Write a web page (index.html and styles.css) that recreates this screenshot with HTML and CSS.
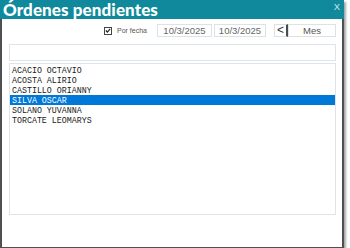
FILE: index.html
```html
<!DOCTYPE html>
<html lang="es">
<head>
<meta charset="utf-8">
<title>Órdenes pendientes</title>
<link rel="stylesheet" href="styles.css">
</head>
<body>
<div class="window">
  <div class="titlebar">
    <span class="title">Órdenes pendientes</span>
    <span class="close">X</span>
  </div>
  <div class="content">
    <div class="toolbar">
      <label class="check">
        <span class="box"><svg width="7" height="7" viewBox="0 0 7 7"><path d="M1 3.5 L2.8 5.3 L6 1.5" fill="none" stroke="#222" stroke-width="1.4"/></svg></span>
        <span class="check-text">Por fecha</span>
      </label>
      <div class="field date1">10/3/2025</div>
      <div class="field date2">10/3/2025</div>
      <div class="prev">&lt;</div>
      <div class="field mes">Mes</div>
    </div>
    <div class="search"></div>
    <div class="list">
      <div class="row">ACACIO OCTAVIO</div>
      <div class="row">ACOSTA ALIRIO</div>
      <div class="row">CASTILLO ORIANNY</div>
      <div class="row selected">SILVA OSCAR</div>
      <div class="row">SOLANO YUVANNA</div>
      <div class="row">TORCATE LEOMARYS</div>
    </div>
  </div>
</div>
</body>
</html>
```

FILE: styles.css
```css
html, body {
  margin: 0;
  padding: 0;
  background: #ffffff;
}

.window {
  width: 344px;
  display: flex;
  flex-direction: column;
  box-shadow: 2px 2px 2px rgba(0, 0, 0, 0.35);
}

.titlebar {
  height: 19px;
  background: #0f899b;
  display: flex;
  justify-content: space-between;
  align-items: flex-start;
  padding: 0 4px 0 3px;
}

.title {
  font-family: Lato, "Open Sans", sans-serif;
  font-weight: 900;
  font-size: 17px;
  line-height: 19px;
  letter-spacing: 0.1px;
  color: #ffffff;
}

.close {
  font-family: "Liberation Sans", Arial, sans-serif;
  font-size: 9.5px;
  line-height: 9px;
  padding-top: 2px;
  color: #cfe6ea;
}

.content {
  height: 223px;
  border: 2px solid #4f4f4f;
  border-top: none;
  background: #ffffff;
  padding: 5px 6px 0 7px;
  display: flex;
  flex-direction: column;
}

.toolbar {
  height: 13px;
  display: flex;
  justify-content: flex-end;
  align-items: stretch;
}

.check {
  display: flex;
  align-items: center;
  gap: 5px;
  margin-right: 10px;
}

.box {
  width: 6px;
  height: 6px;
  border: 1px solid #444;
  background: #fff;
  display: flex;
  align-items: center;
  justify-content: center;
  overflow: hidden;
}

.box svg {
  display: block;
}

.check-text {
  font-family: "Liberation Sans", Arial, sans-serif;
  font-size: 7px;
  color: #555;
}

.field {
  box-sizing: border-box;
  border: 1px solid #dde2e6;
  font-family: "Liberation Sans", Arial, sans-serif;
  font-size: 9.5px;
  line-height: 11px;
  color: #666;
  display: flex;
  align-items: center;
  justify-content: center;
}

.date1 {
  width: 55px;
}

.date2 {
  width: 52px;
  margin-left: 2px;
}

.prev {
  box-sizing: border-box;
  width: 14px;
  margin-left: 8px;
  border: 1px solid #dde2e6;
  border-right: 2px solid #4a4a4a;
  font-family: "Liberation Sans", Arial, sans-serif;
  font-size: 12px;
  line-height: 11px;
  color: #333;
  display: flex;
  align-items: center;
  justify-content: center;
}

.mes {
  width: 48px;
  color: #555;
}

.search {
  margin-top: 7px;
  height: 17px;
  box-sizing: border-box;
  border: 1px solid #dfe4e8;
  background: #fff;
}

.list {
  margin-top: 2px;
  height: 152px;
  box-sizing: border-box;
  border: 1px solid #dfe4e8;
  display: flex;
  flex-direction: column;
}

.row {
  height: 10px;
  box-sizing: border-box;
  padding: 1px 0 0 2px;
  font-family: "Liberation Mono", "Courier New", monospace;
  font-size: 8.3px;
  line-height: 9px;
  color: #1a1a1a;
  white-space: nowrap;
}

.row:first-child {
  margin-top: 1px;
}

.row.selected {
  background: #0078d7;
  color: #ffffff;
}
```
